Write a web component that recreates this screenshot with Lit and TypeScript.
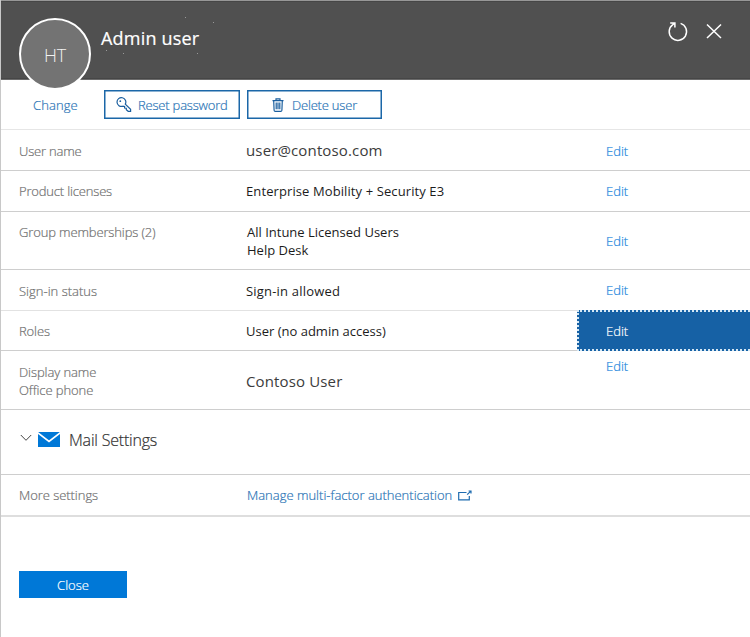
import { LitElement, html, css, svg } from "lit";
import { customElement } from "lit/decorators.js";

interface Row {
  name: string;
  labels: string[];
  values: string[];
}

const rows: Row[] = [
  { name: "username", labels: ["User name"], values: ["user@contoso.com"] },
  { name: "licenses", labels: ["Product licenses"], values: ["Enterprise Mobility + Security E3"] },
  { name: "groups", labels: ["Group memberships (2)"], values: ["All Intune Licensed Users", "Help Desk"] },
  { name: "signin", labels: ["Sign-in status"], values: ["Sign-in allowed"] },
  { name: "roles", labels: ["Roles"], values: ["User (no admin access)"] },
  { name: "display", labels: ["Display name", "Office phone"], values: ["Contoso User"] },
];

const specks = [[213, 22], [197, 53], [185, 17], [106, 50], [123, 53]];

@customElement("app-root")
export class AppRoot extends LitElement {
  static styles = css`
    :host {
      display: block;
      box-sizing: border-box;
      height: 637px;
      overflow: hidden;
      background: #fff;
      border-left: 1px solid #c8c8c8;
      font: 300 13px/18px "Open Sans", "Noto Sans", sans-serif;
      -webkit-text-stroke: .2px currentColor;
      color: #707070;
    }
    * { box-sizing: border-box; }
    svg { display: block; flex: none; }
    button { font: inherit; letter-spacing: inherit; margin: 0; padding: 0; border: 0; background: none; white-space: nowrap; }
    header {
      position: relative;
      height: 80px;
      display: flex;
      align-items: flex-start;
      background: #505050;
      border-top: 1px solid #979797;
      border-bottom: 1px solid #6b6b6b;
      box-shadow: inset 0 1px #464646, inset 0 -1px #464646;
    }
    .specks { position: absolute; left: -1px; top: -1px; }
    .avatar {
      position: relative;
      width: 72px;
      height: 72px;
      margin: 17px 0 0 18px;
      border: 2px solid #fff;
      border-radius: 50%;
      background: #737373;
      color: #f2f2f2;
      display: flex;
      align-items: center;
      justify-content: center;
      font-size: 18px;
      letter-spacing: -0.3px;
      padding-top: 1px;
      flex: none;
      -webkit-text-stroke: 0;
    }
    h1 { margin: 25px 0 0 10px; font-size: 18px; line-height: 24px; font-weight: 400; letter-spacing: .2px; color: #fff; }
    .tools { margin: 19px 25px 0 auto; display: flex; gap: 14px; }
    .actions { height: 50px; display: flex; align-items: center; border-bottom: 1px solid #e6e6e6; color: #2a74b6; }
    .change { width: 44px; margin-left: 32px; letter-spacing: .1px; }
    .outlined {
      height: 29px;
      width: 136px;
      border: 1px solid #1b67a8;
      box-shadow: inset 0 0 0 .5px #1b67a8;
      display: flex;
      align-items: center;
      color: #2a74b6;
    }
    .reset { margin-left: 27px; padding-left: 11px; gap: 6px; letter-spacing: -.2px; }
    .delete { margin-left: 7px; width: 135px; padding-left: 24px; gap: 8px; letter-spacing: -.2px; }
    .row {
      display: grid;
      grid-template-columns: 245px 331px 1fr;
      border-bottom: 1px solid #cecece;
      height: 41px;
      align-items: center;
    }
    .label { padding-left: 18px; letter-spacing: -.13px; }
    .value { font-weight: 400; color: #1c1c1c; white-space: nowrap; -webkit-text-stroke: 0; }
    .edit { height: 100%; padding-left: 29px; color: #2186dc; text-align: left; display: flex; align-items: center; }
    .username .label { padding-top: 2px; letter-spacing: -.2px; }
    .username .edit { padding-top: 2px; }
    .licenses .label { letter-spacing: -.17px; }
    .licenses .value { letter-spacing: .1px; }
    .groups { height: 58px; }
    .groups .label { align-self: start; padding-top: 11px; }
    .groups .value { padding-left: 1px; }
    .signin .label { letter-spacing: 0; padding-top: 2px; }
    .signin .value { letter-spacing: .2px; padding-top: 2px; }
    .signin { border-bottom-color: #e2e2e2; }
    .roles { height: 40px; }
    .roles .edit {
      height: 41px;
      margin-top: -1px;
      padding-left: 27px;
      border: 2px dotted #d5e8f5;
      border-right: 0;
      background: #1661a5;
      color: #fff;
    }
    .display { height: 59px; }
    .display .label { padding-top: 2px; letter-spacing: -.08px; }
    .display .edit { align-items: start; padding-top: 6px; }
    .username .value, .display .value { font-size: 15px; color: #3c3c3c; letter-spacing: .14px; }
    .display .value { padding-top: 2px; }
    .mail { height: 65px; display: flex; align-items: center; padding: 0 0 4px 19px; border-bottom: 1px solid #cecece; color: #333; }
    .mail svg:first-child { margin-top: -5px; }
    .mail .envelope { margin: -2px 0 0 6px; }
    .mail span { font-size: 16px; margin-left: 9px; letter-spacing: -.2px; }
    .more { height: 42px; border-bottom: 2px solid #dedede; }
    .more .label { letter-spacing: -.05px; }
    .link { display: flex; align-items: center; gap: 6px; padding-left: 1px; color: #2a74b6; grid-column: span 2; }
    .close { display: block; margin: 54px 0 0 18px; width: 108px; height: 27px; background: #0078d7; color: #fff; }
  `;

  render() {
    return html`
      <header>
        <svg class="specks" width="240" height="79">
          ${specks.map(([x, y]) => svg`<rect x=${x} y=${y} width="1" height="1" fill="#999"/>`)}
        </svg>
        <div class="avatar"><span>HT</span></div>
        <h1>Admin user</h1>
        <div class="tools">
          <button aria-label="Refresh">
            <svg width="22" height="22" viewBox="0 0 22 22" fill="none" stroke="#fff" stroke-width="1.5">
              <path d="M13.6 3.4A8.7 8.7 0 1 1 5.8 4.6L7.6 3.2M3.2 3H7.9V7.6"/>
            </svg>
          </button>
          <button aria-label="Close panel">
            <svg width="22" height="22" viewBox="0 0 22 22" fill="none" stroke="#fff" stroke-width="1.5">
              <path d="M4 4.5L18 18M18 4.5L4 18"/>
            </svg>
          </button>
        </div>
      </header>
      <div class="actions">
        <div class="change">Change</div>
        <button class="outlined reset">
          <svg width="16" height="16" viewBox="0 0 16 16" fill="none" stroke="#1b5f9f" stroke-width="1.2">
            <path d="M9.3 7.1A4.4 4.4 0 1 0 6.8 9.2L8.6 9.5V11L10.3 11.2V12.7L12.2 14.3H14.6V12.3Z"/>
            <circle cx="4.3" cy="4.2" r=".9" fill="#1b5f9f" stroke="none"/>
          </svg>
          <span>Reset password</span>
        </button>
        <button class="outlined delete">
          <svg width="12" height="14" viewBox="0 0 12 14" fill="none" stroke="#1b5f9f" stroke-width="1.2">
            <path d="M.5 2.6H11.5M4 2.4V.8H8V2.4M1.7 2.8L2.1 12.2Q2.2 13.3 3.2 13.3H8.8Q9.8 13.3 9.9 12.2L10.3 2.8M4.2 4.5V11.3M6 4.5V11.3M7.8 4.5V11.3"/>
          </svg>
          <span>Delete user</span>
        </button>
      </div>
      ${rows.map((r) => html`
        <div class="row ${r.name}">
          <div class="label">${r.labels.map((t) => html`<div>${t}</div>`)}</div>
          <div class="value">${r.values.map((t) => html`<div>${t}</div>`)}</div>
          <button class="edit">Edit</button>
        </div>`)}
      <div class="mail">
        <svg width="12" height="8" viewBox="0 0 12 8" fill="none" stroke="#444" stroke-width="1"><path d="M.8 1L6 6.3L11.2 1"/></svg>
        <svg class="envelope" width="22" height="15" viewBox="0 0 22 15"><path fill="#0078d7" d="M0 0H22V15H0Z"/><path d="M-.5 .6L11 9.5L22.5 .6" fill="none" stroke="#fff" stroke-width="1.7"/></svg>
        <span>Mail Settings</span>
      </div>
      <div class="row more">
        <div class="label">More settings</div>
        <div class="link">
          <span>Manage multi-factor authentication</span>
          <svg width="14" height="11" viewBox="0 0 14 11" fill="none" stroke="#1f6cb0" stroke-width="1.2">
            <path d="M8.5 2.5H.7V9.8H11.3V6M9.2 4.7L12.5 1.4M10.6 1H13V3.4"/>
          </svg>
        </div>
      </div>
      <button class="close">Close</button>
    `;
  }
}
